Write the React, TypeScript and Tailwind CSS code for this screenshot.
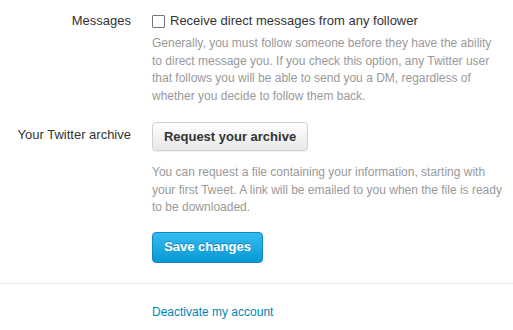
import React from 'react';

const App: React.FC = () => {
  return (
    <div className="w-[513px] h-[330px] bg-white overflow-hidden text-[13px] text-[#333] font-['Liberation_Sans',Arial,sans-serif]">
      {/* Messages */}
      <div className="flex pt-[11px]">
        <div className="w-[131px] shrink-0 text-right leading-[18px] pt-[1px]">Messages</div>
        <div className="ml-[21px] w-[352px]">
          <label className="flex items-center h-[20px]">
            <span className="w-[13px] h-[13px] border border-[#767676] bg-white rounded-[1px] shrink-0" />
            <span className="ml-[5px] leading-[18px]">Receive direct messages from any follower</span>
          </label>
          <p className="mt-[4px] text-[12px] leading-[17.5px] text-[#999]">
            Generally, you must follow someone before they have the ability to direct message you. If you check this option, any Twitter user that follows you will be able to send you a DM, regardless of whether you decide to follow them back.
          </p>
        </div>
      </div>

      {/* Archive */}
      <div className="flex mt-[17px]">
        <div className="w-[131px] shrink-0 text-right pt-[4px] leading-[18px]">Your Twitter archive</div>
        <div className="ml-[21px] w-[352px]">
          <button className="h-[29px] w-[156px] rounded-[4px] border border-[#d0d0d0] bg-gradient-to-b from-white to-[#e8e8e8] font-bold text-[13px] text-[#333] shadow-[0_1px_0_rgba(0,0,0,0.05)]">
            Request your archive
          </button>
          <p className="mt-[13px] text-[12px] leading-[17.5px] text-[#999]">
            You can request a file containing your information, starting with your first Tweet. A link will be emailed to you when the file is ready to be downloaded.
          </p>
          <button className="mt-[15px] h-[31px] w-[111px] rounded-[4px] border border-[#0f86c9] bg-gradient-to-b from-[#33bcef] to-[#0298d4] font-bold text-[13px] text-white [text-shadow:0_-1px_0_rgba(0,0,0,0.25)]">
            Save changes
          </button>
        </div>
      </div>

      <div className="mt-[20px] border-t border-[#e8e8e8]" />

      <div className="pl-[152px] pt-[19px] leading-[18px] text-[12px]">
        <a className="text-[#0084b4]" href="#">Deactivate my account</a>
      </div>
    </div>
  );
};

export default App;
